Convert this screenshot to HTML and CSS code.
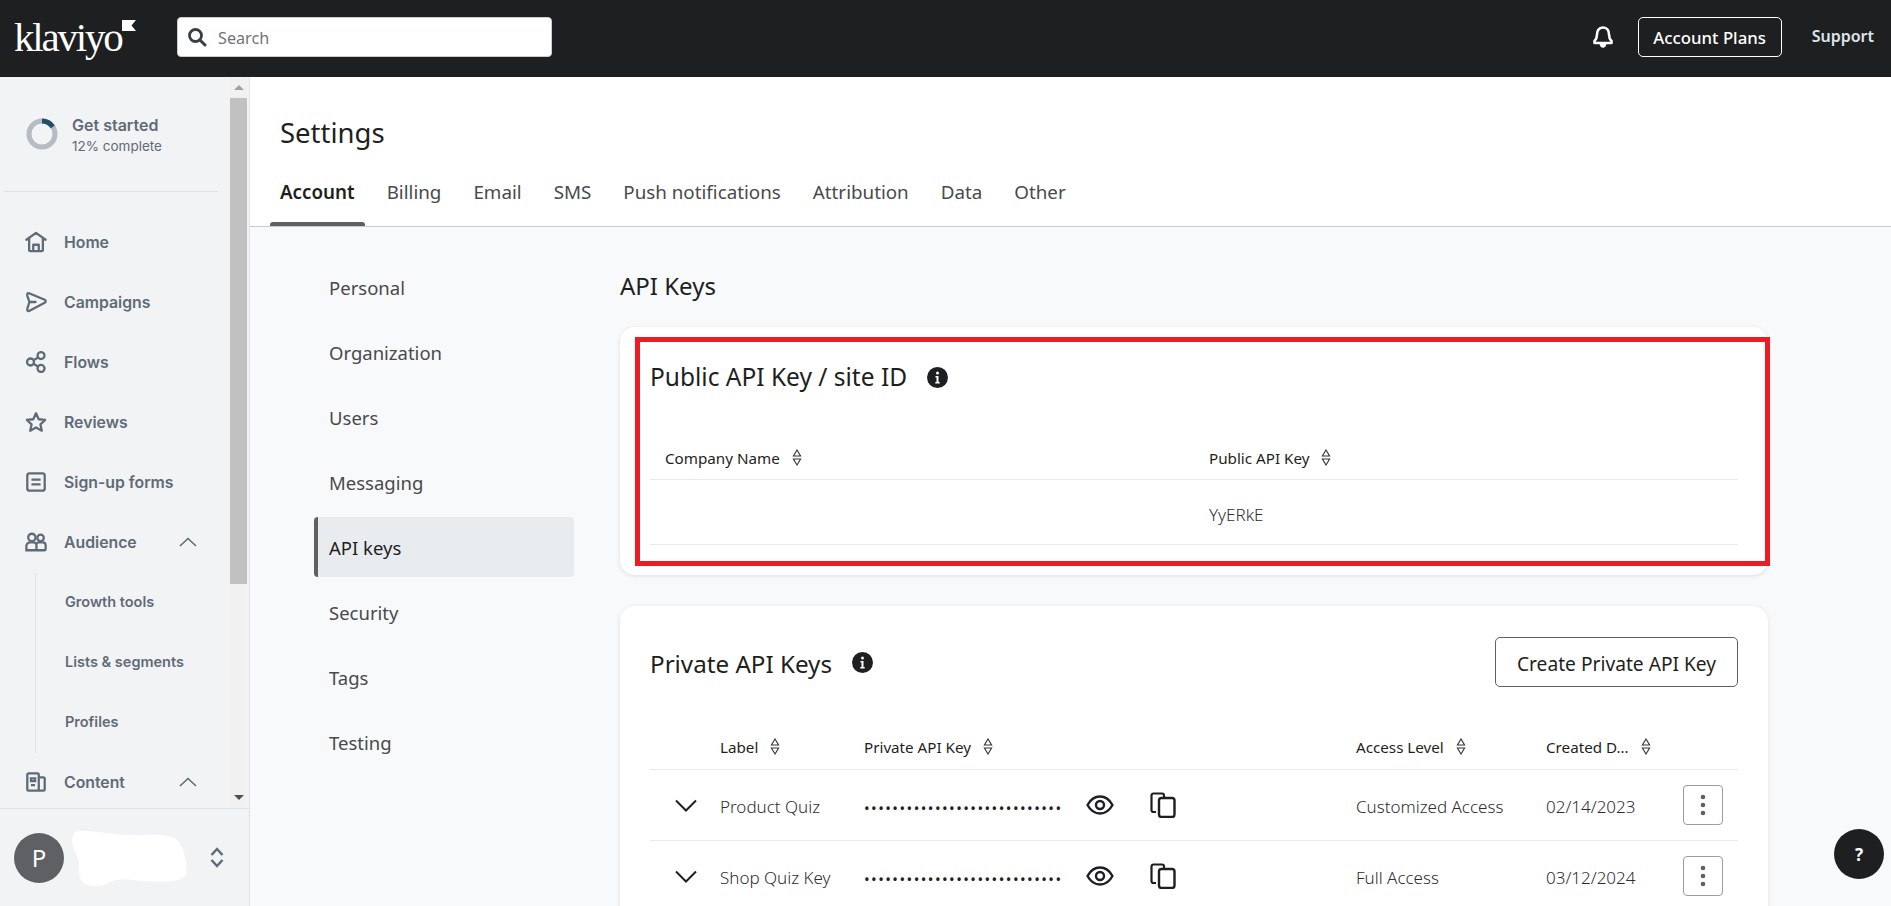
FILE: index.html
```html
<!DOCTYPE html>
<html lang="en">
<head>
<meta charset="utf-8">
<title>Klaviyo Settings</title>
<link rel="stylesheet" href="styles.css">
</head>
<body>
<svg class="defs" width="0" height="0" aria-hidden="true">
  <symbol id="sort" viewBox="0 0 10 17"><path d="M5 1 8.600 7H1.400z M5 16 8.600 10H1.400z" fill="none" stroke="#333" stroke-width="1.100"/></symbol>
  <symbol id="info" viewBox="0 0 21 21"><circle cx="10.500" cy="10.500" r="10.500" fill="#1e1f21"/><circle cx="10.500" cy="6" r="1.500" fill="#fff"/><path d="M8.500 9h3v6h1.200v1.500H8.300V15h1.200v-4.500h-1z" fill="#fff"/></symbol>
  <symbol id="chev-up" viewBox="0 0 18 10"><path d="M1 9 9 1.500 17 9" fill="none" stroke="#5f6b76" stroke-width="1.600"/></symbol>
  <symbol id="chev-down" viewBox="0 0 22 13"><path d="M1 1.500 11 11.500 21 1.500" fill="none" stroke="#1e1f21" stroke-width="2"/></symbol>
  <symbol id="eye" viewBox="0 0 28 20"><path d="M1.500 10C4.500 4.500 9 1.500 14 1.500S23.500 4.500 26.500 10C23.500 15.500 19 18.500 14 18.500S4.500 15.500 1.500 10Z" fill="none" stroke="#1e1f21" stroke-width="2.400" stroke-linejoin="round"/><circle cx="14" cy="10" r="4" fill="none" stroke="#1e1f21" stroke-width="2.400"/></symbol>
  <symbol id="copy" viewBox="0 0 26 26"><path d="M6 20H3.500A2 2 0 0 1 1.500 18V3.500A2 2 0 0 1 3.500 1.500H12A2 2 0 0 1 14 3.500V5" fill="none" stroke="#1e1f21" stroke-width="2.200"/><rect x="9" y="6" width="15.500" height="19" rx="2.500" fill="none" stroke="#1e1f21" stroke-width="2.400"/></symbol>
  <symbol id="dots" viewBox="0 0 6 22"><circle cx="3" cy="3" r="2.300" fill="#5f6063"/><circle cx="3" cy="11" r="2.300" fill="#5f6063"/><circle cx="3" cy="19" r="2.300" fill="#5f6063"/></symbol>
</svg>

<header class="topbar">
  <div class="logo"><span class="logo-word">klaviyo</span><svg class="logo-flag" width="14" height="12" viewBox="0 0 14 12"><path d="M0 0H14L9.500 5.500 14 11H0Z" fill="#fff"/></svg></div>
  <div class="search">
    <svg width="20" height="20" viewBox="0 0 20 20"><circle cx="8.500" cy="8.500" r="6" fill="none" stroke="#373f47" stroke-width="2.800"/><path d="M13 13 18 18" stroke="#373f47" stroke-width="3" stroke-linecap="round"/></svg>
    <span class="search-text">Search</span>
  </div>
  <div class="top-right">
    <svg class="bell" width="20" height="23" viewBox="0 0 20 23"><path d="M10 1.500C5.500 1.500 4 5 4 8.500c0 3-1 5-2.500 6.500v2h17v-2C17 13.500 16 11.500 16 8.500 16 5 14.500 1.500 10 1.500Z" fill="none" stroke="#fff" stroke-width="2.600" stroke-linejoin="round"/><path d="M6.500 17.500C6.800 20.500 8.300 21.800 10 21.800s3.200-1.300 3.500-4.300z" fill="#fff"/></svg>
    <button class="plans">Account Plans</button>
    <span class="support">Support</span>
  </div>
</header>

<div class="app">
  <aside class="sidebar">
    <div class="side-main">
      <div class="side-scroll">
        <div class="started">
          <svg width="32" height="32" viewBox="0 0 32 32"><circle cx="16" cy="16" r="13" fill="none" stroke="#b6bcc4" stroke-width="5"/><path d="M16 3A13 13 0 0 1 26.800 8.800" fill="none" stroke="#1f5068" stroke-width="5"/></svg>
          <div><div class="started-title">Get started</div><div class="started-sub">12% complete</div></div>
        </div>
        <nav class="nav">
          <a class="nav-item"><svg class="nav-icon" viewBox="0 0 24 24"><path d="M1.500 9.500 12 2 22.500 9.500M4.500 8V20.500A1.500 1.500 0 0 0 6 22H18a1.500 1.500 0 0 0 1.500-1.500V8M9 22V15h6v7" fill="none" stroke="#5f6b76" stroke-width="2.500" stroke-linejoin="round" stroke-linecap="round"/></svg>Home</a>
          <a class="nav-item"><svg class="nav-icon" viewBox="0 0 24 24"><path d="M4.500 2.500 21.500 9.500C23 10.200 23 12 21.500 12.800L5 21.500C3 22.500 2 21 2.500 19.500L4.800 12 2.500 5C2 3 3 2 4.500 2.500ZM4.800 12H11.500" fill="none" stroke="#5f6b76" stroke-width="2.500" stroke-linejoin="round" stroke-linecap="round"/></svg>Campaigns</a>
          <a class="nav-item"><svg class="nav-icon" viewBox="0 0 24 24"><g fill="none" stroke="#5f6b76" stroke-width="2.500"><circle cx="17.500" cy="5" r="3.800"/><circle cx="6" cy="12" r="3.800"/><circle cx="17.500" cy="19" r="3.800"/><path d="M9.200 10 14.300 7M9.200 14 14.300 17"/></g></svg>Flows</a>
          <a class="nav-item"><svg class="nav-icon" viewBox="0 0 24 24"><path d="M12 2.500 15 9l7 .8-5.200 4.700 1.500 7L12 18l-6.300 3.500 1.500-7L2 9.800 9 9Z" fill="none" stroke="#5f6b76" stroke-width="2.500" stroke-linejoin="round"/></svg>Reviews</a>
          <a class="nav-item"><svg class="nav-icon" viewBox="0 0 24 24"><rect x="2.500" y="2.500" width="19" height="19" rx="2.500" fill="none" stroke="#5f6b76" stroke-width="2.500"/><path d="M7 9.500H17M7 14.500H17" stroke="#5f6b76" stroke-width="2.500"/></svg>Sign-up forms</a>
          <a class="nav-item"><svg class="nav-icon" viewBox="0 0 24 24"><g fill="none" stroke="#5f6b76" stroke-width="2.500"><circle cx="7.500" cy="7" r="4"/><circle cx="17" cy="7.500" r="3.500"/><path d="M1.500 21V16.500a4 4 0 0 1 4-4h4a3 3 0 0 1 3 3V21ZM12.500 21H21a1.500 1.500 0 0 0 1.500-1.500V15.500a3 3 0 0 0-3-3H15a3 3 0 0 0-2.500 1.500"/></g></svg>Audience<svg class="nav-chev" width="18" height="10"><use href="#chev-up"/></svg></a>
          <div class="subnav">
            <a class="sub-item">Growth tools</a>
            <a class="sub-item">Lists &amp; segments</a>
            <a class="sub-item">Profiles</a>
          </div>
          <a class="nav-item"><svg class="nav-icon" viewBox="0 0 24 24"><g fill="none" stroke="#5f6b76" stroke-width="2.500"><path d="M15 21.500H4A1.500 1.500 0 0 1 2.500 20V4A1.500 1.500 0 0 1 4 2.500H13.500A1.500 1.500 0 0 1 15 4ZM15 7H20A1.500 1.500 0 0 1 21.500 8.500V20A1.500 1.500 0 0 1 20 21.500H15"/><path d="M6.500 8H11V11H6.500ZM6.500 15.500H11"/></g></svg>Content<svg class="nav-chev" width="18" height="10"><use href="#chev-up"/></svg></a>
        </nav>
      </div>
      <div class="scrollbar">
        <div class="sb-btn"><span class="sb-up"></span></div>
        <div class="sb-thumb"></div>
        <div class="sb-track"></div>
        <div class="sb-btn"><span class="sb-down"></span></div>
      </div>
    </div>
    <div class="account">
      <div class="avatar">P</div>
      <svg class="redact" width="120" height="60" viewBox="0 0 120 60"><path d="M8 3C25 2 40 7 60 7 80 7 100 5 108 12 116 20 119 40 117 47 110 56 85 54 65 52 50 50 45 52 35 57 25 60 12 58 10 47 9 38 12 32 6 24 2 15 2 5 8 3Z" fill="#fff"/></svg>
      <svg class="updown" width="14" height="21" viewBox="0 0 14 21"><path d="M1.500 8 7 2 12.500 8M1.500 13 7 19 12.500 13" fill="none" stroke="#5f6b76" stroke-width="2.500"/></svg>
    </div>
  </aside>

  <main class="content">
    <div class="page-head">
      <h1 class="page-title">Settings</h1>
      <div class="tabs">
        <a class="tab tab-active">Account</a>
        <a class="tab">Billing</a>
        <a class="tab">Email</a>
        <a class="tab">SMS</a>
        <a class="tab">Push notifications</a>
        <a class="tab">Attribution</a>
        <a class="tab">Data</a>
        <a class="tab">Other</a>
      </div>
    </div>
    <div class="page-body">
      <div class="side-menu">
        <a class="menu-item">Personal</a>
        <a class="menu-item">Organization</a>
        <a class="menu-item">Users</a>
        <a class="menu-item">Messaging</a>
        <a class="menu-item menu-active">API keys</a>
        <a class="menu-item">Security</a>
        <a class="menu-item">Tags</a>
        <a class="menu-item">Testing</a>
      </div>
      <div class="panel">
        <h2 class="panel-title">API Keys</h2>
        <section class="card card-public">
          <div class="highlight"></div>
          <div class="card-head">
            <h3 class="card-title">Public API Key / site ID</h3>
            <svg class="info" width="21" height="21"><use href="#info"/></svg>
          </div>
          <div class="row head-row cols-public">
            <div class="cell">Company Name<svg class="sort" width="10" height="17"><use href="#sort"/></svg></div>
            <div class="cell">Public API Key<svg class="sort" width="10" height="17"><use href="#sort"/></svg></div>
          </div>
          <div class="row body-row-public cols-public">
            <div class="cell"></div>
            <div class="cell value">YyERkE</div>
          </div>
        </section>
        <section class="card card-private">
          <div class="card-head card-head-split">
            <h3 class="card-title">Private API Keys</h3>
            <svg class="info" width="21" height="21"><use href="#info"/></svg>
            <button class="create">Create Private API Key</button>
          </div>
          <div class="row head-row cols-private">
            <div class="cell"></div>
            <div class="cell">Label<svg class="sort" width="10" height="17"><use href="#sort"/></svg></div>
            <div class="cell">Private API Key<svg class="sort" width="10" height="17"><use href="#sort"/></svg></div>
            <div class="cell">Access Level<svg class="sort" width="10" height="17"><use href="#sort"/></svg></div>
            <div class="cell">Created D...<svg class="sort" width="10" height="17"><use href="#sort"/></svg></div>
            <div class="cell"></div>
          </div>
          <div class="row body-row cols-private">
            <div class="cell cell-chev"><svg width="22" height="13"><use href="#chev-down"/></svg></div>
            <div class="cell value">Product Quiz</div>
            <div class="cell key-cell"><span class="masked">••••••••••••••••••••••••••••</span><svg class="eye" width="28" height="20"><use href="#eye"/></svg><svg class="copy" width="26" height="26"><use href="#copy"/></svg></div>
            <div class="cell value">Customized Access</div>
            <div class="cell value">02/14/2023</div>
            <div class="cell cell-menu"><span class="kebab"><svg width="6" height="22"><use href="#dots"/></svg></span></div>
          </div>
          <div class="row body-row cols-private">
            <div class="cell cell-chev"><svg width="22" height="13"><use href="#chev-down"/></svg></div>
            <div class="cell value">Shop Quiz Key</div>
            <div class="cell key-cell"><span class="masked">••••••••••••••••••••••••••••</span><svg class="eye" width="28" height="20"><use href="#eye"/></svg><svg class="copy" width="26" height="26"><use href="#copy"/></svg></div>
            <div class="cell value">Full Access</div>
            <div class="cell value">03/12/2024</div>
            <div class="cell cell-menu"><span class="kebab"><svg width="6" height="22"><use href="#dots"/></svg></span></div>
          </div>
        </section>
      </div>
    </div>
  </main>
</div>
<button class="help">?</button>
</body>
</html>
```
FILE: styles.css
```css
* { box-sizing: border-box; }
html, body { margin: 0; height: 100%; overflow: hidden; }
body {
  font-family: "Noto Sans", "Open Sans", sans-serif;
  color: #1e1f21;
  background: #f8f9fb;
  display: flex;
  flex-direction: column;
}
.defs { position: absolute; }
h1, h2, h3 { margin: 0; font-weight: 400; }
button { font-family: inherit; cursor: pointer; }

/* top bar */
.topbar {
  flex: 0 0 77px;
  background: #1e1f21;
  display: flex;
  align-items: center;
  padding: 0 17px 3px 14px;
}
.logo { display: flex; align-items: flex-start; width: 163px; color: #fff; }
.logo-word {
  font-family: "Liberation Serif", serif;
  font-size: 41px;
  line-height: 46px;
  letter-spacing: -2.200px;
  margin-top: -1px;
}
.logo-flag { margin: 5px 0 0 0; }
.search {
  width: 375px;
  height: 40px;
  background: #fff;
  border: 1px solid #c9ccd1;
  border-radius: 4px;
  display: flex;
  align-items: center;
  gap: 11px;
  padding-left: 9px;
  font-size: 16.200px;
  color: #71757b;
}
.search-text { padding-top: 2px; }
.top-right { margin-left: auto; display: flex; align-items: center; }
.bell { margin-right: 25px; }
.plans {
  width: 144px;
  height: 40px;
  background: transparent;
  border: 1px solid #fff;
  border-radius: 5px;
  color: #fff;
  font-size: 16.800px;
  font-weight: 500;
  padding: 1px 0 0;
}
.support {
  margin-left: 30px;
  color: #dfe4ea;
  font-size: 16px;
  font-weight: 600;
  position: relative;
  top: -1px;
}

.app { flex: 1; display: flex; min-height: 0; }

/* sidebar */
.sidebar {
  width: 250px;
  flex: none;
  background: #f2f3f5;
  border-right: 1px solid #dfe2e6;
  display: flex;
  flex-direction: column;
  font-family: "Inter", "Liberation Sans", sans-serif;
  color: #5f6b76;
}
.side-main { flex: 1; min-height: 0; display: flex; }
.side-scroll { width: 230px; overflow: hidden; }
.scrollbar { width: 17px; display: flex; flex-direction: column; background: #f1f1f1; }
.sb-btn { flex: 0 0 21px; display: flex; align-items: center; justify-content: center; }
.sb-up { border: 5px solid transparent; border-top: 0; border-bottom: 5px solid #a3a3a3; }
.sb-down { border: 5px solid transparent; border-bottom: 0; border-top: 5px solid #505050; }
.sb-thumb { flex: 0 0 486px; background: #c1c1c1; }
.sb-track { flex: 1; }
.started {
  height: 115px;
  margin: 0 12px 20px 4px;
  padding-left: 22px;
  border-bottom: 1px solid #dfe2e6;
  display: flex;
  align-items: center;
  gap: 14px;
}
.started-title { font-size: 16px; font-weight: 600; line-height: 22px; padding-top: 1px; }
.started-sub { font-size: 13.500px; line-height: 20px; }
.nav-item {
  height: 60px;
  display: flex;
  align-items: center;
  padding-left: 25px;
  font-size: 15.800px;
  font-weight: 600;
}
.nav-icon { width: 22px; height: 22px; margin-right: 17px; flex: none; }
.nav-chev { margin-left: auto; margin-right: 33px; }
.subnav { margin: 1px 0 -1px 35px; border-left: 1px solid #dfe2e6; padding-left: 29px; height: 180px; }
.sub-item { display: flex; align-items: center; height: 60px; padding-bottom: 3px; font-size: 14.500px; font-weight: 600; }
.account {
  flex: 0 0 98px;
  border-top: 1px solid #dfe2e6;
  display: flex;
  align-items: center;
  padding-left: 14px;
}
.avatar {
  width: 50px;
  height: 50px;
  border-radius: 50%;
  background: #5f6063;
  color: #fff;
  font-family: "Noto Sans", sans-serif;
  font-size: 24px;
  display: flex;
  align-items: center;
  justify-content: center;
  flex: none;
}
.redact { margin-left: 5px; flex: none; }
.updown { margin-left: 21px; }

/* content */
.content { flex: 1; min-width: 0; display: flex; flex-direction: column; }
.page-head { flex: none; height: 150px; background: #fff; border-bottom: 1px solid #c5cbd3; padding: 35px 0 0 20px; }
.page-title { font-size: 27.500px; line-height: 42px; padding-left: 10px; color: #1e1f21; }
.tabs { display: flex; gap: 12px; margin-top: 8px; }
.tab {
  height: 64px;
  padding: 0 10px 5px;
  display: flex;
  align-items: center;
  font-size: 18.800px;
  color: #484a4d;
  position: relative;
}
.tab-active { font-weight: 600; color: #1e1f21; }
.tab-active::after {
  content: "";
  position: absolute;
  left: 0;
  right: 0;
  bottom: 0;
  height: 4px;
  background: #5f6063;
  border-radius: 3px 3px 0 0;
}
.page-body { flex: 1; min-height: 0; display: flex; padding: 30px 0 0 64px; gap: 46px; }
.side-menu { width: 260px; flex: none; display: flex; flex-direction: column; gap: 5px; }
.menu-item {
  height: 60px;
  padding-left: 15px;
  display: flex;
  align-items: center;
  font-size: 18.500px;
  color: #484a4d;
  border-radius: 4px;
}
.menu-active {
  background: #e9ecef;
  border-left: 4px solid #5f6063;
  padding-left: 11px;
  color: #1e1f21;
}
.panel { width: 1148px; flex: none; margin-top: 12px; }
.panel-title { font-size: 24px; line-height: 34px; margin-bottom: 24px; color: #1e1f21; }
.card {
  background: #fff;
  border-radius: 15px;
  box-shadow: 0 1px 4px rgba(30, 31, 33, .12);
  padding: 30px;
  position: relative;
  margin-bottom: 31px;
}
.card-private { padding-top: 31px; }
.highlight { position: absolute; left: 15px; right: -2px; top: 10px; bottom: 9px; border: 5px solid #ed1c24; }
.card-head { display: flex; align-items: center; height: 40px; }
.card-head-split { height: 50px; }
.card-title { font-size: 24.500px; line-height: 40px; }
.card-private .card-title { font-size: 24.200px; position: relative; top: 2px; }
.info { margin-left: 20px; }
.create {
  margin-left: auto;
  width: 243px;
  height: 50px;
  background: #fff;
  border: 1px solid #5f6063;
  border-radius: 5px;
  font-size: 19.200px;
  color: #1e1f21;
  padding: 2px 0 0;
}
.row { display: grid; border-bottom: 1px solid #e7e9ec; align-items: center; }
.cols-public { grid-template-columns: 544px 544px; }
.cols-private { grid-template-columns: 55px 144px 492px 190px 152px 55px; }
.head-row { height: 44px; margin-top: 39px; font-size: 15.200px; color: #1e1f21; }
.cols-private.head-row { padding-bottom: 2px; }
.body-row-public { height: 65px; }
.body-row-public .value { position: relative; top: 2px; }
.body-row { height: 71px; }
.cell { padding-left: 15px; display: flex; align-items: center; }
.sort { margin-left: 12px; }
.value { font-size: 17px; font-weight: 300; color: #2c2e31; }
.body-row .value { position: relative; top: 1px; }
.cell-chev { padding-left: 25px; }
.masked { flex: none; width: 197px; margin-top: 5px; font-size: 15px; letter-spacing: 1.450px; white-space: nowrap; color: #1e1f21; }
.eye { margin-left: 25px; }
.copy { margin-left: 36px; }
.cell-menu { padding-left: 0; }
.kebab {
  width: 40px;
  height: 40px;
  border: 1px solid #9a9da1;
  border-radius: 4px;
  display: flex;
  align-items: center;
  justify-content: center;
}
.help {
  position: absolute;
  left: 1834px;
  top: 829px;
  width: 50px;
  height: 50px;
  border: 0;
  border-radius: 50%;
  background: #1e1f21;
  color: #fff;
  font-size: 17px;
  font-weight: 700;
  padding: 0;
}
```
